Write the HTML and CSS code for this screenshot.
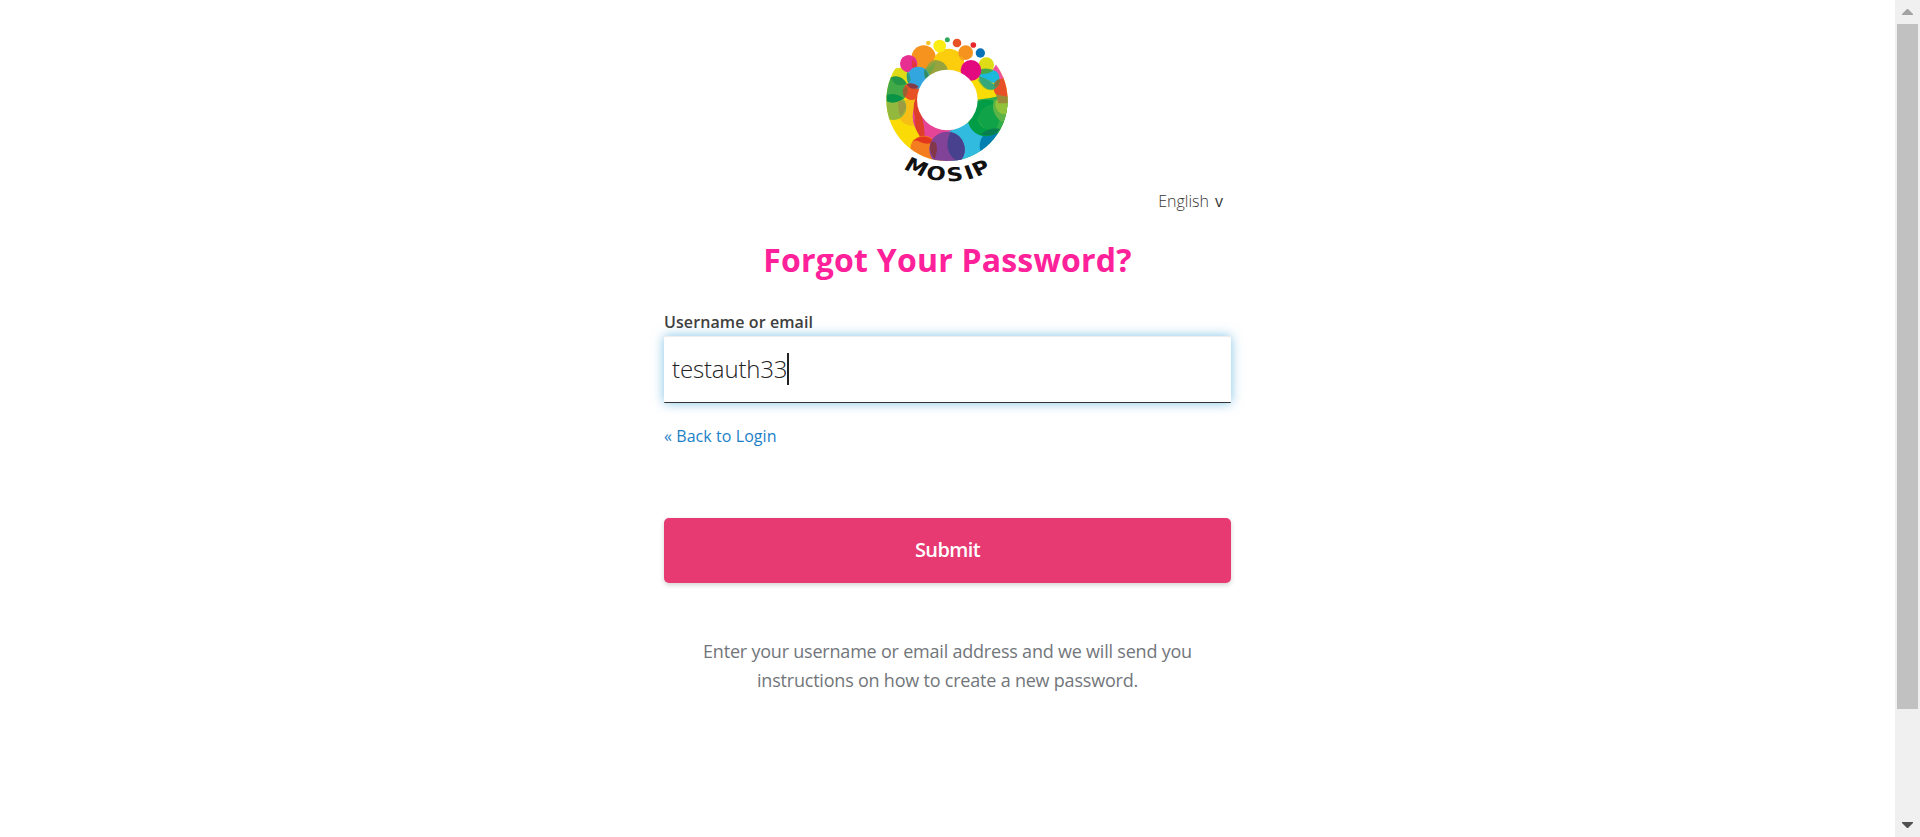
FILE: index.html
```html
<!DOCTYPE html>
<html lang="en">
<head>
<meta charset="utf-8">
<title>Forgot Your Password?</title>
<link rel="stylesheet" href="styles.css">
</head>
<body>
<div class="page">
  <main class="content">
    <div class="card">
      <svg class="logo" viewBox="0 0 450 492" role="img" aria-label="MOSIP">
        <defs>
          <clipPath id="disc"><circle cx="231" cy="226" r="182"/></clipPath>
        </defs>
        <g clip-path="url(#disc)">
          <path d="M49 130H413V420H49Z" fill="#fadb06"/>
          <circle cx="92" cy="160" r="32" fill="#dfdc17"/>
          <circle cx="125" cy="262" r="40" fill="#f7be15"/>
          <circle cx="205" cy="275" r="77" fill="#e54497"/>
          <path d="M134 275A77 77 0 0 1 150 200L160 280Q195 305 193 350Q165 355 150 335Q132 310 134 275Z" fill="#df3f2a"/>
          <path d="M150 262Q162 285 164 332Q180 336 194 349L240 330L235 300Z" fill="#e54497"/>
          <circle cx="291" cy="363" r="63" fill="#31bbde"/>
          <path d="M238 318Q300 300 322 260L400 330L300 430H245Z" fill="#31bbde"/>
          <circle cx="161" cy="372" r="40" fill="#f47d20"/>
          <path d="M125 352Q158 318 194 349Q175 362 150 351Q136 342 125 352Z" fill="#e3371d"/>
          <circle cx="231" cy="373" r="53" fill="#804398"/>
          <path d="M241 321A53 53 0 0 1 267 412Q214 382 241 321Z" fill="#48418d"/>
          <path d="M182 353Q201 340 201 376L195 402Q175 382 182 353Z" fill="#83384a"/>
          <circle cx="380" cy="363" r="51" fill="#0080b1"/>
          <circle cx="364" cy="266" r="60" fill="#2fae49"/>
          <circle cx="348" cy="279" r="55" fill="#009d46"/>
          <path d="M322 279Q345 225 390 240L420 300L385 318Q330 320 322 279Z" fill="#2fae49"/>
          <path d="M300 250Q350 205 392 240Q394 300 366 331Q330 300 322 278Z" fill="#009d46" opacity="0.65"/>
          <path d="M372 226Q360 260 392 289L425 292V215Z" fill="#5cb446"/>
          <path d="M332 328Q355 307 390 311L380 325Q360 337 332 328Z" fill="#087d50"/>
          <circle cx="405" cy="239" r="29" fill="#91c33a"/>
          <path d="M323 166Q365 158 385 214Q355 222 320 224Z" fill="#f9dc05"/>
          <circle cx="402" cy="187" r="32" fill="#e85027"/>
          <path d="M378 208Q395 213 420 216V235H385Z" fill="#9b8b38"/>
          <path d="M366 139L379 116L400 150L403 160L388 162Q368 155 366 139Z" fill="#ed539f"/>
          <circle cx="76" cy="193" r="38" fill="#41a948"/>
          <path d="M62 158Q90 145 110 175Q80 193 62 158Z" fill="#239746"/>
          <circle cx="70" cy="246" r="39" fill="#92b83e"/>
          <path d="M50 210Q78 200 101 220Q76 240 50 229Z" fill="#079447"/>
          <path d="M85 229Q101 223 108 240Q110 254 92 275Q82 257 85 229Z" fill="#9b9c42"/>
        </g>
        <circle cx="161" cy="97" r="36" fill="#f6921e"/>
        <circle cx="116" cy="116" r="26" fill="#e62f90"/>
        <path d="M127 103Q142 115 140 127Q130 133 125 124Z" fill="#e2353f"/>
        <circle cx="236" cy="118" r="47" fill="#fbcd0c"/>
        <path d="M163 140Q178 103 198 105Q226 108 233 133L224 150L166 163Z" fill="#98a33d"/>
        <path d="M163 132Q178 131 196 110Q195 130 174 153Z" fill="#71a744"/>
        <circle cx="125" cy="199" r="26" fill="#e85025"/>
        <circle cx="145" cy="158" r="33" fill="#32a6de"/>
        <path d="M113 139Q130 165 115 176Q106 153 113 139Z" fill="#2d9c84"/>
        <path d="M163 132Q174 140 176 154L166 163Q160 146 163 132Z" fill="#338c62"/>
        <path d="M110 177Q130 171 145 184L142 190Q118 195 110 177Z" fill="#853b48"/>
        <path d="M99 193Q110 177 113 190Q115 205 105 217Q96 207 99 193Z" fill="#9d6131"/>
        <circle cx="349" cy="120" r="23" fill="#dfdc17"/>
        <path d="M327 138Q350 126 378 139Q389 147 388 164L378 174Q340 174 327 151Z" fill="#1bb9dc"/>
        <path d="M330 134Q352 126 370 137Q350 150 330 147Z" fill="#48a848"/>
        <path d="M323 164Q349 155 370 177L372 194Q344 202 323 164Z" fill="#74b840"/>
        <path d="M325 153Q349 159 370 178L388 164Q391 179 375 191Q340 202 325 153Z" fill="#35a77b"/>
        <path d="M374 174Q383 160 390 164Q390 181 374 188Z" fill="#85743a"/>
        <circle cx="303" cy="136" r="31" fill="#e3097e"/>
        <circle cx="287" cy="83" r="22" fill="#f6921e"/>
        <path d="M267 92Q281 95 283 104L278 108Q268 101 267 92Z" fill="#f6a81c"/>
        <circle cx="209" cy="63" r="19" fill="#f9ed14"/>
        <circle cx="175" cy="54" r="7" fill="#f6c72b"/>
        <circle cx="232" cy="44" r="7.5" fill="#30a95e"/>
        <circle cx="261" cy="54" r="13" fill="#e85125"/>
        <circle cx="310" cy="60" r="8.5" fill="#e9262b"/>
        <circle cx="331" cy="84" r="14" fill="#0871b7"/>
        <circle cx="232" cy="225" r="91" fill="#fff"/>
        <text class="logo-name" transform="scale(1.2 1)" x="82 139 194 243 266" y="431 462 470 464 456" rotate="26 7 -6 -17 -24">MOSIP</text>
      </svg>
      <div class="locale"><span>English</span><span class="chevron">v</span></div>
      <h1 class="title">Forgot Your Password?</h1>
      <label class="label">Username or email</label>
      <div class="field"><span class="value">testauth33</span><span class="caret"></span></div>
      <a class="back">« Back to Login</a>
      <button class="submit" type="button">Submit</button>
      <p class="info">Enter your username or email address and we will send you<br>instructions on how to create a new password.</p>
    </div>
  </main>
  <div class="scrollbar">
    <svg class="arrow" viewBox="0 0 11 6"><path d="M5 0h1l5 5v1H0V5z" fill="#a3a3a3"/></svg>
    <div class="thumb"></div>
    <svg class="arrow arrow-down" viewBox="0 0 11 6"><path d="M0 0h11v1L6 6H5L0 1z" fill="#505050"/></svg>
  </div>
</div>
</body>
</html>
```
FILE: styles.css
```css
* { box-sizing: border-box; }
body {
  margin: 0;
  background: #fff;
  font-family: "Open Sans", "Noto Sans", sans-serif;
  color: #363636;
}
.page { display: flex; height: 837px; overflow: hidden; }
.content { flex: 1; display: flex; justify-content: center; }
.card { width: 567px; padding-top: 25px; display: flex; flex-direction: column; }
.logo { width: 150px; height: 164px; margin-left: 206px; }
.logo-name { font: bold 57px "DejaVu Sans", sans-serif; fill: #111; }
.locale {
  display: flex;
  justify-content: flex-end;
  gap: 6px;
  padding-right: 8px;
  font-size: 16px;
  font-weight: 300;
  line-height: 24px;
}
.chevron { font-weight: 400; }
.title {
  margin: 25px 0 0;
  font-size: 32px;
  font-weight: 700;
  line-height: 44px;
  letter-spacing: 0.2px;
  text-align: center;
  color: #ff2199;
}
.label {
  margin-top: 28px;
  font-size: 16px;
  font-weight: 600;
  line-height: 24px;
  letter-spacing: 0.1px;
  color: #404040;
}
.field {
  display: flex;
  align-items: center;
  height: 67px;
  margin-top: 2px;
  padding-left: 8px;
  border-bottom: 1px solid #333;
  border-radius: 1px;
  box-shadow: inset 0 1px 1px rgba(0, 0, 0, 0.075), 0 0 12px rgba(0, 136, 206, 0.5);
  color: #222;
  font-size: 24px;
  font-weight: 300;
  letter-spacing: -0.15px;
}
.value { padding-bottom: 2px; }
.caret { width: 2px; height: 32px; background: #222; }
.back {
  margin-top: 21px;
  font-size: 16px;
  line-height: 24px;
  letter-spacing: 0.07px;
  color: #1b80c8;
}
.submit {
  height: 65px;
  margin-top: 70px;
  padding: 0 0 2px;
  border: 0;
  border-radius: 5px;
  background: #e73972;
  box-shadow: 0 2px 5px rgba(0, 0, 0, 0.18);
  color: #fff;
  font-family: inherit;
  font-size: 20px;
  font-weight: 600;
  letter-spacing: -0.6px;
}
.info {
  margin: 54px 0 0;
  font-size: 18px;
  line-height: 29px;
  letter-spacing: -0.21px;
  text-align: center;
  color: #72767b;
}
.scrollbar {
  width: 25px;
  padding: 9px 2px;
  background: #f0f0f0;
  display: flex;
  flex-direction: column;
  align-items: center;
}
.arrow { width: 11px; height: 6px; }
.thumb { width: 21px; height: 685px; margin-top: 9px; background: #c1c1c1; }
.arrow-down { margin-top: auto; }
```
